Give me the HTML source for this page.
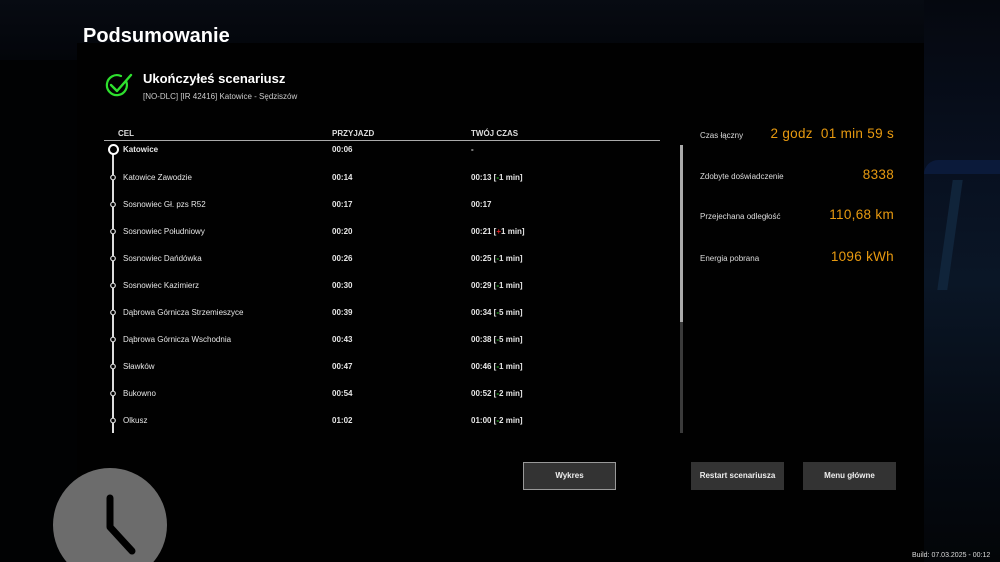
<!DOCTYPE html>
<html><head><meta charset="utf-8"><style>
*{margin:0;padding:0;box-sizing:border-box}
body{width:1000px;height:562px;overflow:hidden;background:#010203;font-family:"Liberation Sans",sans-serif;color:#fff;position:relative}
.a{position:absolute;white-space:nowrap}
.bgtop{position:absolute;left:0;top:0;width:1000px;height:60px;background:linear-gradient(180deg,#070b12,#03050a)}
.bg1{position:absolute;left:924px;top:0;width:76px;height:562px;background:linear-gradient(180deg,#05080f 0%,#081020 30%,#0a1626 50%,#050a12 80%,#030508 100%)}
.panel{position:absolute;left:77px;top:43px;width:847px;height:519px;background:#010101}
.h{font-weight:bold;color:#ddd;font-size:8px}
.r{font-size:8px;color:#e6e6e6}
.b{font-weight:bold}
.g{color:#2fcf2f}.rd{color:#e02020}
.lab{font-size:8px;color:#ddd;left:700px}
.val{color:#e89a10;font-size:13.5px;right:106px;letter-spacing:0.3px}
.btn{position:absolute;top:462px;width:93px;height:28px;background:#333;font-size:8px;color:#eee;text-align:center;line-height:28px;font-weight:bold}
</style></head><body>
<div class="bgtop"></div>
<div class="bg1"></div>
<div class="a" style="left:924px;top:160px;width:76px;height:14px;background:#0b1a3a;border-radius:30px 0 0 0"></div>
<div class="a" style="left:945px;top:180px;width:10px;height:110px;background:#10243a;transform:skewX(-8deg)"></div>
<div class="panel"></div>
<div class="a" style="left:83px;top:25px;font-size:20px;font-weight:bold">Podsumowanie</div>
<svg class="a" style="left:104px;top:71px" width="32" height="30" viewBox="0 0 32 30"><path d="M22 10A10 10 0 1 1 17 5" fill="none" stroke="#2ee02e" stroke-width="2.2" stroke-linecap="round"/><path d="M7 14l6 6L27 4" fill="none" stroke="#2ee02e" stroke-width="2.4" stroke-linecap="round" stroke-linejoin="round"/></svg>
<div class="a" style="left:143px;top:71px;font-size:13px;font-weight:bold">Ukończyłeś scenariusz</div>
<div class="a" style="left:143px;top:92px;font-size:8px;color:#ccc">[NO-DLC] [IR 42416] Katowice - Sędziszów</div>
<div class="a h" style="left:118px;top:129px">CEL</div>
<div class="a h" style="left:332px;top:129px">PRZYJAZD</div>
<div class="a h" style="left:471px;top:129px">TWÓJ CZAS</div>
<div class="a" style="left:104px;top:140px;width:556px;height:1px;background:#aaa"></div>
<div class="a" style="left:112px;top:150px;width:2px;height:283px;background:#ddd"></div>
<div class="a" style="left:108px;top:144px;width:11px;height:11px;border:2px solid #fff;border-radius:50%;background:#000"></div>
<div class="a" style="left:680px;top:145px;width:3px;height:177px;background:#aaa"></div>
<div class="a" style="left:680px;top:322px;width:3px;height:111px;background:#3a3a3a"></div>
<div class="a r b" style="left:123px;top:145px">Katowice</div><div class="a r b" style="left:332px;top:145px">00:06</div><div class="a r b" style="left:471px;top:145px">-</div>
<div class="a r" style="left:123px;top:173px">Katowice Zawodzie</div><div class="a r b" style="left:332px;top:173px">00:14</div><div class="a r b" style="left:471px;top:173px">00:13 [<span class="g">-</span>1 min]</div>
<div class="a r" style="left:123px;top:200px">Sosnowiec Gł. pzs R52</div><div class="a r b" style="left:332px;top:200px">00:17</div><div class="a r b" style="left:471px;top:200px">00:17</div>
<div class="a r" style="left:123px;top:227px">Sosnowiec Południowy</div><div class="a r b" style="left:332px;top:227px">00:20</div><div class="a r b" style="left:471px;top:227px">00:21 [<span class="rd">+</span>1 min]</div>
<div class="a r" style="left:123px;top:254px">Sosnowiec Dańdówka</div><div class="a r b" style="left:332px;top:254px">00:26</div><div class="a r b" style="left:471px;top:254px">00:25 [<span class="g">-</span>1 min]</div>
<div class="a r" style="left:123px;top:281px">Sosnowiec Kazimierz</div><div class="a r b" style="left:332px;top:281px">00:30</div><div class="a r b" style="left:471px;top:281px">00:29 [<span class="g">-</span>1 min]</div>
<div class="a r" style="left:123px;top:308px">Dąbrowa Górnicza Strzemieszyce</div><div class="a r b" style="left:332px;top:308px">00:39</div><div class="a r b" style="left:471px;top:308px">00:34 [<span class="g">-</span>5 min]</div>
<div class="a r" style="left:123px;top:335px">Dąbrowa Górnicza Wschodnia</div><div class="a r b" style="left:332px;top:335px">00:43</div><div class="a r b" style="left:471px;top:335px">00:38 [<span class="g">-</span>5 min]</div>
<div class="a r" style="left:123px;top:362px">Sławków</div><div class="a r b" style="left:332px;top:362px">00:47</div><div class="a r b" style="left:471px;top:362px">00:46 [<span class="g">-</span>1 min]</div>
<div class="a r" style="left:123px;top:389px">Bukowno</div><div class="a r b" style="left:332px;top:389px">00:54</div><div class="a r b" style="left:471px;top:389px">00:52 [<span class="g">-</span>2 min]</div>
<div class="a r" style="left:123px;top:416px">Olkusz</div><div class="a r b" style="left:332px;top:416px">01:02</div><div class="a r b" style="left:471px;top:416px">01:00 [<span class="g">-</span>2 min]</div>
<svg class="a" style="left:108px;top:170px" width="10" height="260"><g fill="#000" stroke="#ddd" stroke-width="1.2"><circle cx="5" cy="7.5" r="2.3"/><circle cx="5" cy="34.5" r="2.3"/><circle cx="5" cy="61.5" r="2.3"/><circle cx="5" cy="88.5" r="2.3"/><circle cx="5" cy="115.5" r="2.3"/><circle cx="5" cy="142.5" r="2.3"/><circle cx="5" cy="169.5" r="2.3"/><circle cx="5" cy="196.5" r="2.3"/><circle cx="5" cy="223.5" r="2.3"/><circle cx="5" cy="250.5" r="2.3"/></g></svg>
<div class="a lab" style="top:131px">Czas łączny</div><div class="a val" style="top:126px">2 godz&nbsp; 01 min 59 s</div>
<div class="a lab" style="top:172px">Zdobyte doświadczenie</div><div class="a val" style="top:167px">8338</div>
<div class="a lab" style="top:212px">Przejechana odległość</div><div class="a val" style="top:207px">110,68 km</div>
<div class="a lab" style="top:254px">Energia pobrana</div><div class="a val" style="top:249px">1096 kWh</div>
<div class="btn" style="left:523px;border:1px solid #999;line-height:26px">Wykres</div>
<div class="btn" style="left:691px">Restart scenariusza</div>
<div class="btn" style="left:803px">Menu główne</div>
<svg class="a" style="left:52px;top:467px" width="116" height="95"><circle cx="58" cy="58" r="57" fill="#6c6c6c"/><path d="M58 31V60L80 84" fill="none" stroke="#000" stroke-width="7" stroke-linecap="round" stroke-linejoin="round"/></svg>
<div class="a" style="left:912px;top:552px;font-size:7px;color:#ddd">Build: 07.03.2025 - 00:12</div>
</body></html>
